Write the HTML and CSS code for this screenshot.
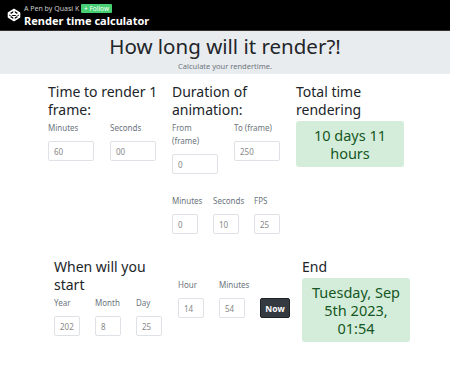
FILE: index.html
```html
<!DOCTYPE html>
<html lang="en">
<head>
  <meta charset="UTF-8" />
  <meta name="viewport" content="width=device-width, initial-scale=1.0"/>
  <title>Render time calculator</title>
  <link rel="stylesheet" href="styles.css">
</head>
<body>
  <div class="pen-bar">
    <svg class="pen-logo" width="14" height="14" viewBox="0 0 14 14" fill="none" stroke="#fff" stroke-width="1.6" stroke-linejoin="round">
      <path d="M7 1.5 L12.5 5 L12.5 9 L7 12.5 L1.5 9 L1.5 5 Z"/>
      <path d="M7 1.5 L7 5 M7 9 L7 12.5 M1.5 5 L7 9 L12.5 5 M1.5 9 L7 5 L12.5 9"/>
    </svg>
    <div class="pen-info">
      <div class="pen-by">A Pen by Quasi K <span class="follow">+ Follow</span></div>
      <div class="pen-title">Render time calculator</div>
    </div>
  </div>

  <div class="jumbo">
    <h1>How long will it render?!</h1>
    <p>Calculate your rendertime.</p>
  </div>

  <div class="row row-one">
    <div class="col col-a">
      <h3>Time to render 1 frame:</h3>
      <div class="fields">
        <div class="field wide">
          <label>Minutes</label>
          <input type="text" value="60">
        </div>
        <div class="field wide">
          <label>Seconds</label>
          <input type="text" value="00">
        </div>
      </div>
    </div>

    <div class="col col-b">
      <h3>Duration of animation:</h3>
      <div class="fields">
        <div class="field wide">
          <label>From (frame)</label>
          <input type="text" value="0">
        </div>
        <div class="field wide">
          <label>To (frame)</label>
          <input type="text" value="250">
        </div>
      </div>
      <div class="fields spaced">
        <div class="field">
          <label>Minutes</label>
          <input type="text" value="0">
        </div>
        <div class="field">
          <label>Seconds</label>
          <input type="text" value="10">
        </div>
        <div class="field">
          <label>FPS</label>
          <input type="text" value="25">
        </div>
      </div>
    </div>

    <div class="col col-c">
      <h3>Total time rendering</h3>
      <div class="result">10 days 11 hours</div>
    </div>
  </div>

  <div class="row row-two">
    <div class="col col-a">
      <h3>When will you start</h3>
      <div class="fields">
        <div class="field">
          <label>Year</label>
          <input type="text" value="2023">
        </div>
        <div class="field">
          <label>Month</label>
          <input type="text" value="8">
        </div>
        <div class="field">
          <label>Day</label>
          <input type="text" value="25">
        </div>
      </div>
    </div>

    <div class="col col-b time-col">
      <div class="fields bottom">
        <div class="field">
          <label>Hour</label>
          <input type="text" value="14">
        </div>
        <div class="field">
          <label>Minutes</label>
          <input type="text" value="54">
        </div>
        <button class="now-btn">Now</button>
      </div>
    </div>

    <div class="col col-c">
      <h3>End</h3>
      <div class="result">Tuesday, Sep 5th 2023, 01:54</div>
    </div>
  </div>
</body>
</html>
```

FILE: styles.css
```css
body {
  margin: 0;
  font-family: "Noto Sans", "Open Sans", sans-serif;
  color: #212529;
  background-color: #ffffff;
}

.pen-bar {
  background-color: #000000;
  height: 31px;
  display: flex;
  align-items: center;
  padding-left: 7px;
  border-bottom: 1px solid #333;
  box-sizing: border-box;
}

.pen-logo {
  margin-right: 3px;
}

.pen-by {
  font-size: 7px;
  color: #cccccc;
  line-height: 10px;
}

.follow {
  display: inline-block;
  background-color: #47cf73;
  color: #ffffff;
  padding: 0 3px;
  border-radius: 1px;
  font-size: 6.5px;
  line-height: 9px;
}

.pen-title {
  color: #ffffff;
  font-weight: bold;
  font-size: 11px;
  line-height: 13px;
}

.jumbo {
  background-color: #e9ecef;
  text-align: center;
  padding: 1px 0 3px;
}

.jumbo h1 {
  margin: 0;
  font-weight: 400;
  font-size: 20.5px;
  line-height: 28px;
}

.jumbo p {
  margin: 1px 0 0;
  font-size: 7.5px;
  line-height: 10px;
  color: #6c757d;
}

.row {
  display: flex;
}

.row-one {
  padding-left: 48px;
  margin-top: 9px;
}

.row-two {
  padding-left: 54px;
  margin-top: 24px;
}

.col h3 {
  margin: 0;
  font-weight: 400;
  font-size: 14px;
  line-height: 18px;
}

.col-a, .col-b {
  width: 124px;
}

.col-c {
  width: 108px;
}

.fields {
  display: flex;
  align-items: flex-start;
}

.fields.bottom {
  align-items: flex-end;
}

.fields.spaced {
  margin-top: 18px;
}

.field {
  width: 41px;
  padding-top: 2px;
}

.field.wide {
  width: 62px;
}

.field label {
  display: block;
  font-size: 8px;
  line-height: 13px;
  color: #6c757d;
  width: 46px;
  margin-bottom: 7px;
}

.field input {
  display: block;
  box-sizing: border-box;
  width: 26px;
  height: 20px;
  border: 1px solid #dee2e6;
  border-radius: 2px;
  padding: 0 5px;
  font-family: inherit;
  font-size: 8px;
  color: #888888;
  background: #fff;
}

.field.wide input {
  width: 46px;
}

.time-col {
  padding-top: 18px;
}

.now-btn {
  background-color: #343a40;
  color: #ffffff;
  border: 1px solid #202428;
  border-radius: 2px;
  height: 20px;
  width: 30px;
  padding: 0;
  font-family: inherit;
  font-size: 8.5px;
  font-weight: bold;
}

.result {
  margin-top: 2px;
  background-color: #d4edda;
  color: #155724;
  border-radius: 3px;
  font-size: 14.5px;
  line-height: 18px;
  text-align: center;
  padding: 5px 8px;
}
```
